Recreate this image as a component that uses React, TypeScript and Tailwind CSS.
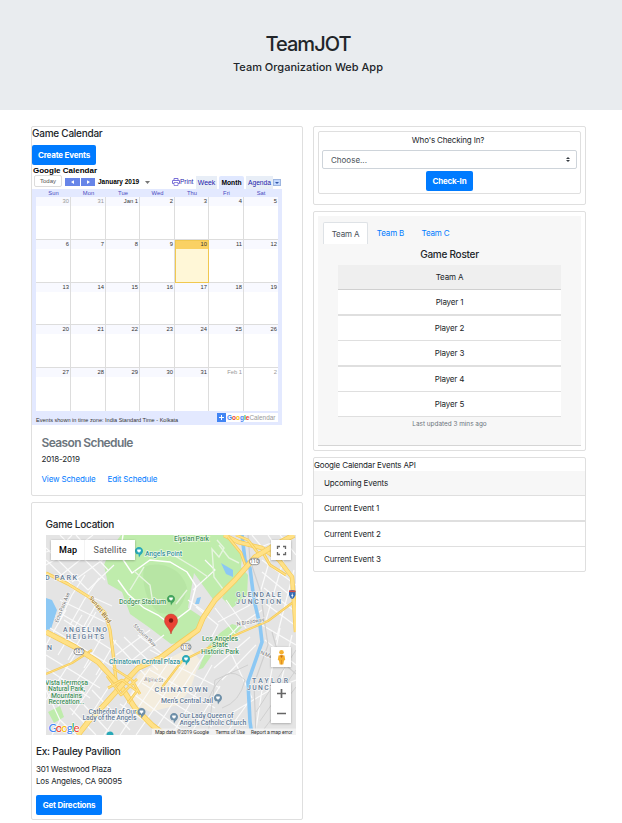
import React from "react";

const weekdays = ["Sun", "Mon", "Tue", "Wed", "Thu", "Fri", "Sat"];
const weeks = [
  ["30", "31", "Jan 1", "2", "3", "4", "5"],
  ["6", "7", "8", "9", "10", "11", "12"],
  ["13", "14", "15", "16", "17", "18", "19"],
  ["20", "21", "22", "23", "24", "25", "26"],
  ["27", "28", "29", "30", "31", "Feb 1", "2"],
];
const card = "rounded-[2px] border border-[#dfdfdf] bg-white";
const button = "flex items-center justify-center rounded-[2px] bg-[#007bff] font-bold text-white text-[8px] h-5 tracking-[-0.2px]";
const heading = "text-[10px] leading-3 font-medium tracking-[-0.25px]";

function CalendarWidget() {
  return (
    <div className="w-[250px] font-['Liberation_Sans',sans-serif] text-[6px] tracking-normal">
      <div className="flex h-[13px] items-end text-[#2222aa]">
        <div className="ml-[2px] mb-[2px] flex h-[12px] w-[28px] items-center justify-center rounded-[2px] border border-[#dcdcdc] bg-white text-[#555]">Today</div>
        <div className="ml-[3px] mb-[3px] flex h-[8px] gap-px">
          <div className="flex w-[15px] items-center justify-center bg-[#6785e8]">
            <svg width="3" height="4" viewBox="0 0 4 5"><path d="M4 0v5L0 2.5z" fill="#fff" /></svg>
          </div>
          <div className="flex w-[14px] items-center justify-center bg-[#6785e8]">
            <svg width="3" height="4" viewBox="0 0 4 5"><path d="M0 0v5l4-2.5z" fill="#fff" /></svg>
          </div>
        </div>
        <div className="ml-[3px] mb-[3px] w-[43px] whitespace-nowrap text-[6.5px] leading-[9px] font-bold text-black">January 2019</div>
        <svg className="mb-[5px] ml-[4px]" width="5" height="3" viewBox="0 0 5 3"><path d="M0 0h5L2.500 3z" fill="#777" /></svg>
        <svg className="mb-[3px] ml-[22px]" width="8" height="8" viewBox="0 0 8 8">
          <path d="M2 2.500V.5h4v2M2 5.500H.5v-3h7v3H6" fill="none" stroke="#7a70d8" />
          <path d="M2 4.500h4v3H2z" fill="#fff" stroke="#7a70d8" strokeWidth="0.800" />
        </svg>
        <div className="mb-[2px] w-[16px] whitespace-nowrap text-[6.5px] leading-[10px]">Print</div>
        <div className="flex h-[13px] w-[21px] items-center justify-center bg-[#e8eef7] text-[6.9px]">Week</div>
        <div className="ml-[2px] flex h-[13px] w-[25px] items-center justify-center rounded-t-[2px] bg-[#e0e8ff] text-[6.7px] font-bold text-black">Month</div>
        <div className="ml-[2px] flex h-[13px] w-[27px] items-center justify-center bg-[#e8eef7] text-[6.7px]">Agenda</div>
        <div className="mb-[3px] flex h-[7px] w-[8px] items-center justify-center border border-[#9eb6e0] bg-[#c3d9ff]">
          <svg width="4" height="2" viewBox="0 0 4 2"><path d="M0 0h4L2 2z" fill="#3558a8" /></svg>
        </div>
      </div>
      <div className="h-[236px] bg-[#e3e9ff] px-1">
        <div className="grid h-[8px] grid-cols-[35px_35px_34px_35px_34px_35px_34px] pt-px text-center text-[5.8px] leading-[7px] text-[#4a4ac0]">
          {weekdays.map((d) => <div key={d}>{d}</div>)}
        </div>
        <div className="grid h-[214px] grid-rows-[43px_43px_42px_43px_43px] border-b border-[#b6c8fb]">
          {weeks.map((week, r) => (
            <div key={r} className="grid grid-cols-[35px_35px_34px_35px_34px_35px_34px]">
              {week.map((d, c) => {
                const today = d === "10";
                const other = (r === 0 && c < 2) || (r === 4 && c > 4);
                return (
                  <div key={c} className={`border-[#ddd] ${c < 6 ? "border-r" : ""} ${r < 4 ? "border-b" : ""} ${today ? "bg-[#fff7d7] outline outline-[#f0c850] -outline-offset-1" : "bg-white"}`}>
                    <div className={`h-[9px] pr-px text-right text-[5.8px] leading-[9px] ${today ? "bg-[#fad163]" : other && r === 4 ? "bg-white" : "bg-[#f8f9ff]"} ${other ? "text-[#999]" : "text-[#333]"}`}>{d}</div>
                  </div>
                );
              })}
            </div>
          ))}
        </div>
        <div className="flex h-[14px] items-center justify-between text-[#333]">
          <span className="whitespace-nowrap pt-[4px] text-[5.55px]">Events shown in time zone: India Standard Time - Kolkata</span>
          <div className="-mt-px flex h-[9px] w-[61px] items-center bg-white">
            <svg className="shrink-0" width="9" height="9" viewBox="0 0 9 9"><path d="M0 0h9v9H0z" fill="#4285f4" /><path d="M4.500 2v5M2 4.500h5" stroke="#fff" /></svg>
            <span className="ml-px whitespace-nowrap text-[6.5px] font-bold text-[#4285f4]">G<i className="not-italic text-[#ea4335]">o</i><i className="not-italic text-[#fbbc05]">o</i>g<i className="not-italic text-[#34a853]">l</i><i className="not-italic text-[#ea4335]">e</i></span>
            <span className="text-[6.4px] text-[#999]">Calendar</span>
          </div>
        </div>
      </div>
    </div>
  );
}

const minorRoads = [
  "M46 552L60 548L72 535M46 565L80 545L93 535M60 576L105 540M72 582L112 553M88 590L114 565M60 535L105 580M76 535L108 570M46 548L88 590M46 560L75 588",
  "M60 620L72 595L85 575M70 625L84 600L99 578M84 626L97 603M60 600L105 622M58 612L98 635M72 588L112 606",
  "M46 645L66 610M58 655L82 615M68 660L96 612M84 668L108 626M96 675L116 640M50 628L115 668M64 620L112 650M46 655L100 688M46 668L90 698",
  "M46 700L78 650M58 706L92 660M72 715L104 668M86 722L112 682M92 690L130 730M84 705L112 735M70 708L96 735M60 720L76 735M46 690L60 720L52 735",
  "M104 735L150 668M120 735L172 657M136 735L186 663M152 735L204 655M172 735L212 665M190 735L220 686M120 704L165 735M135 695L188 735M142 683L212 727M150 670L215 708M165 660L220 688",
  "M113 640L145 675M124 637L158 670M138 635L170 660M116 655L150 630M126 665L164 635M150 650L178 665",
  "M262 560L296 585M262 572L296 600M264 588L296 612M266 604L296 626M272 552L258 600M284 558L266 620M294 570L276 640M262 625L296 645M265 640L296 665M280 628L268 690M292 635L278 695",
  "M210 655L240 625L262 610M214 668L250 637M222 680L256 645M224 638L252 698M220 720L270 690L296 680M255 735L262 690M225 735L250 700",
  "M252 535L266 552M268 535L285 560M280 535L296 555M258 548L290 536",
  "M193 590L215 570L205 560M188 600L205 612M196 607L218 625L210 640M215 608L240 640M226 600L246 628M218 622L250 605",
];

const Label = ({ x, y, w, size = 7.5, fill = "#647c98", weight = 500, rotate, children }: { x: number; y: number; w: number; size?: number; fill?: string; weight?: number; rotate?: number; children: string }) => (
  <text x={x} y={y} textLength={w} lengthAdjust="spacing" fontSize={size} fontWeight={weight} fill={fill} stroke="#fff" strokeWidth={1.4} strokeOpacity={0.7} paintOrder="stroke" transform={rotate ? `rotate(${rotate} ${x} ${y})` : undefined}>{children}</text>
);

const Poi = ({ x, y, fill }: { x: number; y: number; fill: string }) => (
  <g transform={`translate(${x} ${y})`}>
    <path d="M0 5.500C-1-.2 0 3-2.700 1.900A4 4 0 1 1 2.700 1.900C1 3 1 4 0 5.500z" fill={fill} />
    <path d="M-1.800-2.500h3.600v2H1L0 1-1-.5h-.8z" fill="#fff" />
  </g>
);

const Highway = ({ d, width = 4 }: { d: string; width?: number }) => (
  <g fill="none" strokeLinejoin="round">
    <path d={d} stroke="#f5cb58" strokeWidth={width} />
    <path d={d} stroke="#ffe187" strokeWidth={width - 1.4} />
  </g>
);

const Shield = ({ x, y, children }: { x: number; y: number; children: string }) => (
  <g>
    <rect x={x - 5} y={y - 3.2} width="10" height="6.400" rx="3" fill="#fff" stroke="#777" strokeWidth="0.8" />
    <text x={x} y={y + 1.8} textAnchor="middle" fontSize="5" fill="#555">{children}</text>
  </g>
);

function LocationMap() {
  const green = "#45905c";
  const teal = "#36909a";
  return (
    <svg className="block tracking-normal" width="250" height="200" viewBox="46 535 250 200" fontFamily="Roboto, sans-serif">
      <defs>
        <filter id="lift" x="-20%" y="-20%" width="140%" height="150%"><feDropShadow dx="0" dy="0.600" stdDeviation="0.900" floodOpacity="0.300" /></filter>
      </defs>
      <path d="M46 535h250v200H46z" fill="#e4e4e4" />
      <path d="M138 674L165 660L190 648L200 660L190 690L178 705L150 712L128 700z" fill="#f7efdc" opacity="0.800" />
      <path d="M121 535H228L242 556L240 578L216 600L200 625L190 641L171 644L150 628L130 614L122 592L108 584L104 565L110 550z" fill="#bfecac" />
      <path d="M194 573L215 602L203 618L188 608z" fill="#e4e4e4" />
      <path d="M144 567C160 560 182 568 187 588C184 605 176 617 160 613C147 606 141 583 144 567z" fill="#b7e5a4" />
      <path d="M198 670L208 646L220 633L232 624L242 627L228 642L214 652L203 668z" fill="#bfecac" />
      <path d="M240 566L248 575L247 596L232 608L222 598z" fill="#bfecac" />
      <path d="M48 712L60 706L64 717L54 723z" fill="#bfecac" />
      <path d="M46 598L52 600L57 610L51 629L46 630zM221 563L233 570L233 577L226 574zM197 598L201 597L199 604L195 604z" fill="#8cc8f4" />
      <g fill="none" stroke="#fafafa" strokeWidth="1.200">
        {minorRoads.map((d) => <path key={d} d={d} />)}
      </g>
      <g fill="none" stroke="#e6f5df" strokeWidth="1.400">
        <path d="M123 535L120 555L132 573L150 560L170 562L187 572L196 586L190 609L170 624L158 615L144 608L128 594L118 580" stroke="#fff" />
        <path d="M160 553L175 556L195 568L208 577M134 571L150 585L153 604M144 567L130 590M187 590L176 604" />
        <path d="M217 540L224 548L219 557L212 549L214 577L223 589L218 596M219 545L229 558L239 563" />
      </g>
      <path d="M242 535L245 560L250 568L254 600L260 625L262 642L248 682L250 722L252 735" fill="none" stroke="#8cc8f4" strokeWidth="3.600" />
      <path d="M248 535L250 560L260 590L265 625L268 645L254 684L256 735M272 632L280 660L296 674" fill="none" stroke="#cfcfcf" strokeWidth="1.200" />
      <path d="M256 712L296 650M260 721L296 670M264 729L296 687M248 665L215 680L208 735M208 700Q225 660 245 680Q240 702 222 708" fill="none" stroke="#d0d0d0" strokeWidth="1" />
      <Highway d="M46 674L72 663L92 650M160 690L182 661L204 650L240 633L268 621L296 600" width={2.2} />
      <Highway d="M46 573L68 584L89 597L105 613L110 630L113 653L116 680" width={3.2} />
      <Highway d="M224 535L238 542L262 548L279 560L292 577L294 602L296 632" width={4.5} />
      <Highway d="M228 537L241 553L246 567M258 553L248 540L236 535M262 551L270 565L286 575" width={2.8} />
      <Highway d="M46 632L75 647L98 662L122 688L135 708L152 725L165 735" width={5.4} />
      <Highway d="M294 535L275 545L255 557L235 580L215 600L203 618L198 630L180 643L160 658L138 668L122 685L105 704L88 722L78 735" width={5.4} />
      <Highway d="M108 688L122 680L137 691L128 703M113 668L132 680L140 694M107 676L121 695L137 679" width={2.6} />
      <Label x={174} y={540.5} w={35} size={7} fill={green}>Elysian Park</Label>
      <Label x={145} y={556} w={37} size={7} fill={teal}>Angels Point</Label>
      <Poi x={139} y={552} fill="#29a9b8" />
      <Label x={119} y={603.5} w={47} size={7} fill={green}>Dodger Stadium</Label>
      <Poi x={171} y={600} fill="#43a35d" />
      <Label x={45} y={580} w={32} size={7.2}>D PARK</Label>
      <Label x={236} y={597} w={45} size={6.8}>GLENDALE</Label>
      <Label x={236} y={604.3} w={45} size={6.8}>JUNCTION</Label>
      <Label x={63} y={631.7} w={44} size={6.8}>ANGELINO</Label>
      <Label x={66} y={639} w={38} size={6.8}>HEIGHTS</Label>
      <Label x={47} y={650} w={6} size={7}>N</Label>
      <Label x={237} y={626} w={28} size={5.5} weight={400} fill="#777" rotate={-10}>N Broadway</Label>
      <Label x={89} y={598} w={32} size={6} fill="#9a7526" rotate={53}>Sunset Blvd</Label>
      <Label x={58} y={623} w={32} size={5.5} weight={400} fill="#777" rotate={-68}>Echo Park Ave</Label>
      <Label x={133} y={626} w={30} size={5.5} weight={400} fill="#777" rotate={45}>Stadium Way</Label>
      <Label x={202} y={640.5} w={36} size={7} fill={green}>Los Angeles</Label>
      <Label x={212} y={647} w={16} size={7} fill={green}>State</Label>
      <Label x={201} y={653.5} w={38} size={7} fill={green}>Historic Park</Label>
      <Label x={109} y={664} w={71} size={7} fill={teal}>Chinatown Central Plaza</Label>
      <Poi x={186} y={660} fill="#29a9b8" />
      <Label x={144} y={681} w={19} size={5.5} weight={400} fill="#777" rotate={3}>Alpine St</Label>
      <Label x={154.5} y={691.5} w={53} size={7.2}>CHINATOWN</Label>
      <Label x={161} y={702.5} w={52} size={7}>Men's Central Jail</Label>
      <Poi x={218} y={699} fill="#6e8fa8" />
      <Label x={252} y={682.7} w={36} size={6.8}>TAYLOR</Label>
      <Label x={247} y={690} w={43} size={6.8}>JUNCTION</Label>
      <Label x={260} y={654} w={22} size={5.5} weight={400} fill="#777" rotate={20}>N Main St</Label>
      <Label x={45} y={684.5} w={43} size={7} fill={green}>Vista Hermosa</Label>
      <Label x={48} y={691} w={37} size={7} fill={green}>Natural Park,</Label>
      <Label x={51} y={697.5} w={31} size={7} fill={green}>Mountains</Label>
      <Label x={48.500} y={704} w={36} size={7} fill={green}>Recreation...</Label>
      <Label x={88.500} y={713.5} w={48} size={7}>Cathedral of Our</Label>
      <Label x={82.500} y={720} w={54} size={7}>Lady of the Angels</Label>
      <Poi x={141.500} y={713} fill="#6e8fa8" />
      <Label x={179.5} y={718} w={54} size={7}>Our Lady Queen of</Label>
      <Label x={179.5} y={724.5} w={67} size={7}>Angels Catholic Church</Label>
      <Poi x={174} y={718} fill="#6e8fa8" />
      <Shield x={79} y={651.5}>101</Shield>
      <Shield x={254.5} y={561.5}>110</Shield>
      <Shield x={186} y={647}>110</Shield>
      <path d="M289 591q3-2 6.500 0v4q-1 3-3.200 4-2.500-1-3.300-4z" fill="#346bb5" /><path d="M289 590.500h6.500v1.600H289z" fill="#d64a43" />
      <path d="M291.300 595.500h2M292.300 593.500v4" stroke="#fff" strokeWidth="0.800" />
      <path d="M171 634C170 628 164.500 626 164.500 620.500A6.500 6.500 0 0 1 177.500 620.500C177.500 626 172 628 171 634z" fill="#ea4335" stroke="#bd3329" strokeWidth="0.500" />
      <circle cx="171" cy="620.500" r="2.200" fill="#7d1712" />
      <circle cx="110" cy="735" r="3.500" fill="#29a9b8" />
      <path d="M152 728.500H296V735H152z" fill="#f5f5f5" opacity="0.850" />
      <g fontSize="5.200" fill="#333">
        <text x="155" y="734" textLength="54">Map data ©2019 Google</text>
        <text x="215.500" y="734" textLength="29.500">Terms of Use</text>
        <text x="251" y="734" textLength="41.500">Report a map error</text>
      </g>
      <text x="48.500" y="731.5" fontSize="11.500" fontWeight="500" fontFamily="Lato, sans-serif" textLength="31" stroke="#fff" strokeWidth="1.200" paintOrder="stroke">
        <tspan fill="#4285f4">G</tspan><tspan fill="#ea4335">o</tspan><tspan fill="#fbbc05">o</tspan><tspan fill="#4285f4">g</tspan><tspan fill="#34a853">l</tspan><tspan fill="#ea4335">e</tspan>
      </text>
      <g filter="url(#lift)" fill="#fff">
        <path d="M51 540h84v20H51zM271 540h20v20h-20zM271 647h20v20h-20zM271 683h20v40h-20z" />
      </g>
      <path d="M84.500 540v20" stroke="#eee" strokeWidth="0.700" />
      <text x="59" y="553" fontSize="9" fontWeight="500" textLength="18" fill="#000">Map</text>
      <text x="93.500" y="553" fontSize="9" textLength="33" fill="#565656">Satellite</text>
      <path d="M277.500 549v-2.500h2.500M283 546.500h2.500v2.500M285.500 552v2.500h-2.500M280 554.500h-2.500v-2.500" fill="none" stroke="#666" strokeWidth="1.300" />
      <path d="M277 693.500h9M281.500 689v9M277 713.500h9" fill="none" stroke="#666" strokeWidth="1.700" />
      <g fill="#f5b02e"><circle cx="281.500" cy="652.300" r="2.300" /><path d="M278.500 655.500q3-1 6 0l.7 4.500-1.200.500-.7 4h-3.600l-.7-4-1.200-.5z" /></g>
      <path d="M280 655.500h3l-1.500 2.500zM281.300 660h.5v4.500h-.5z" fill="#c96a18" />
    </svg>
  );
}

function Row({ children, className }: { children: React.ReactNode; className: string }) {
  return <div className={`flex items-center ${className}`}>{children}</div>;
}

export default function App() {
  return (
    <div className="h-[823px] w-[622px] overflow-hidden bg-white font-['Inter',sans-serif] text-[8px] leading-3 tracking-[-0.16px] text-[#212529]">
      <header className="flex h-[110px] flex-col items-center bg-[#e9ecef] pt-8 pr-[6px]">
        <h1 className="text-[20px] leading-6 font-medium tracking-[-0.95px]">TeamJOT</h1>
        <p className="mt-[3px] text-[11px] leading-4 font-medium tracking-normal">Team Organization Web App</p>
      </header>
      <main className="flex items-start gap-[10px] pt-4 pl-[31px]">
        <div className="flex w-[272px] flex-col gap-[6px]">
          <section className={`${card} h-[370px]`}>
            <h2 className={`${heading} h-[18px]`}>Game Calendar</h2>
            <button className={`${button} w-16`}>Create Events</button>
            <div className="h-[11px] pl-px font-['Liberation_Sans',sans-serif] text-[8px] leading-[11px] font-bold tracking-normal text-black">Google Calendar</div>
            <CalendarWidget />
            <div className="pt-[11px] pl-[9.5px]">
              <h3 className="text-[12px] leading-[14px] font-semibold tracking-[-0.62px] text-[#6c757d]">Season Schedule</h3>
              <p className="mt-[3px]">2018-2019</p>
              <div className="mt-2 flex gap-3 text-[#007bff]"><a>View Schedule</a><a>Edit Schedule</a></div>
            </div>
          </section>
          <section className={`${card} h-[318px]`}>
            <h2 className={`${heading} mt-[15px] ml-[13.5px]`}>Game Location</h2>
            <div className="mt-[5px] ml-[14px]"><LocationMap /></div>
            <div className="pl-1">
              <h3 className={`${heading} mt-[10px]`}>Ex: Pauley Pavilion</h3>
              <p className="mt-[6px]">301 Westwood Plaza<br />Los Angeles, CA 90095</p>
              <button className={`${button} mt-2 w-[66px]`}>Get Directions</button>
            </div>
          </section>
        </div>
        <div className="flex w-[273px] flex-col gap-[6px]">
          <section className={`${card} h-[79px] p-1`}>
            <div className={`${card} flex h-[63px] flex-col items-center`}>
              <p className="mt-[2px] pr-[3px]">Who's Checking In?</p>
              <div className="mt-1 flex h-[19px] w-[255px] items-center justify-between rounded-[2px] border border-[#ced4da] pr-[6px] pl-2 text-[#495057]">
                <span className="tracking-normal">Choose...</span>
                <svg width="4" height="5" viewBox="0 0 4 5"><path d="M0 2L2 0l2 2zM0 3h4L2 5z" fill="#343a40" /></svg>
              </div>
              <button className={`${button} mt-[2px] w-[47px]`}>Check-In</button>
            </div>
          </section>
          <section className={`${card} h-[240px] p-1`}>
            <div className="flex h-[230px] flex-col border-b border-[#d5d5d5] bg-[#f7f7f7] pt-[6px]">
              <nav className="ml-[5px] flex h-[22px] items-center text-[#007bff]">
                <a className="flex h-[22px] w-[45px] items-center justify-center rounded-t-[2px] border border-b-0 border-[#dee2e6] bg-white text-[#495057]">Team A</a>
                <a className="w-[45px] text-center">Team B</a>
                <a className="w-[45px] text-center">Team C</a>
              </nav>
              <h2 className={`${heading} mt-1 text-center`}>Game Roster</h2>
              <div className="mx-auto mt-[5px] w-[223px] bg-white">
                <Row className="h-[25px] justify-center border-b border-[#d0d0d0] bg-[#efefef]">Team A</Row>
                <Row className="h-[26px] justify-center border-b-2 border-[#dfdfdf]">Player 1</Row>
                <Row className="h-[25px] justify-center border-b border-[#dfdfdf]">Player 2</Row>
                <Row className="h-[26px] justify-center border-b-2 border-[#dfdfdf]">Player 3</Row>
                <Row className="h-[25px] justify-center border-b border-[#dfdfdf]">Player 4</Row>
                <Row className="h-[25px] justify-center border-b border-[#dfdfdf]">Player 5</Row>
              </div>
              <p className="mt-px text-center text-[6.4px] tracking-normal text-[#6c757d]">Last updated 3 mins ago</p>
            </div>
          </section>
          <section className={`${card} h-[115px]`}>
            <h2 className="h-[13px] pt-px leading-[13px]">Google Calendar Events API</h2>
            <Row className="h-[25px] border-b border-[#dfdfdf] bg-[#f7f7f7] pl-[10px]">Upcoming Events</Row>
            <Row className="h-[26px] border-b-2 border-[#dfdfdf] pl-[10px]">Current Event 1</Row>
            <Row className="h-[25px] border-b border-[#dfdfdf] pl-[10px]">Current Event 2</Row>
            <Row className="h-[24px] pl-[10px]">Current Event 3</Row>
          </section>
        </div>
      </main>
    </div>
  );
}
